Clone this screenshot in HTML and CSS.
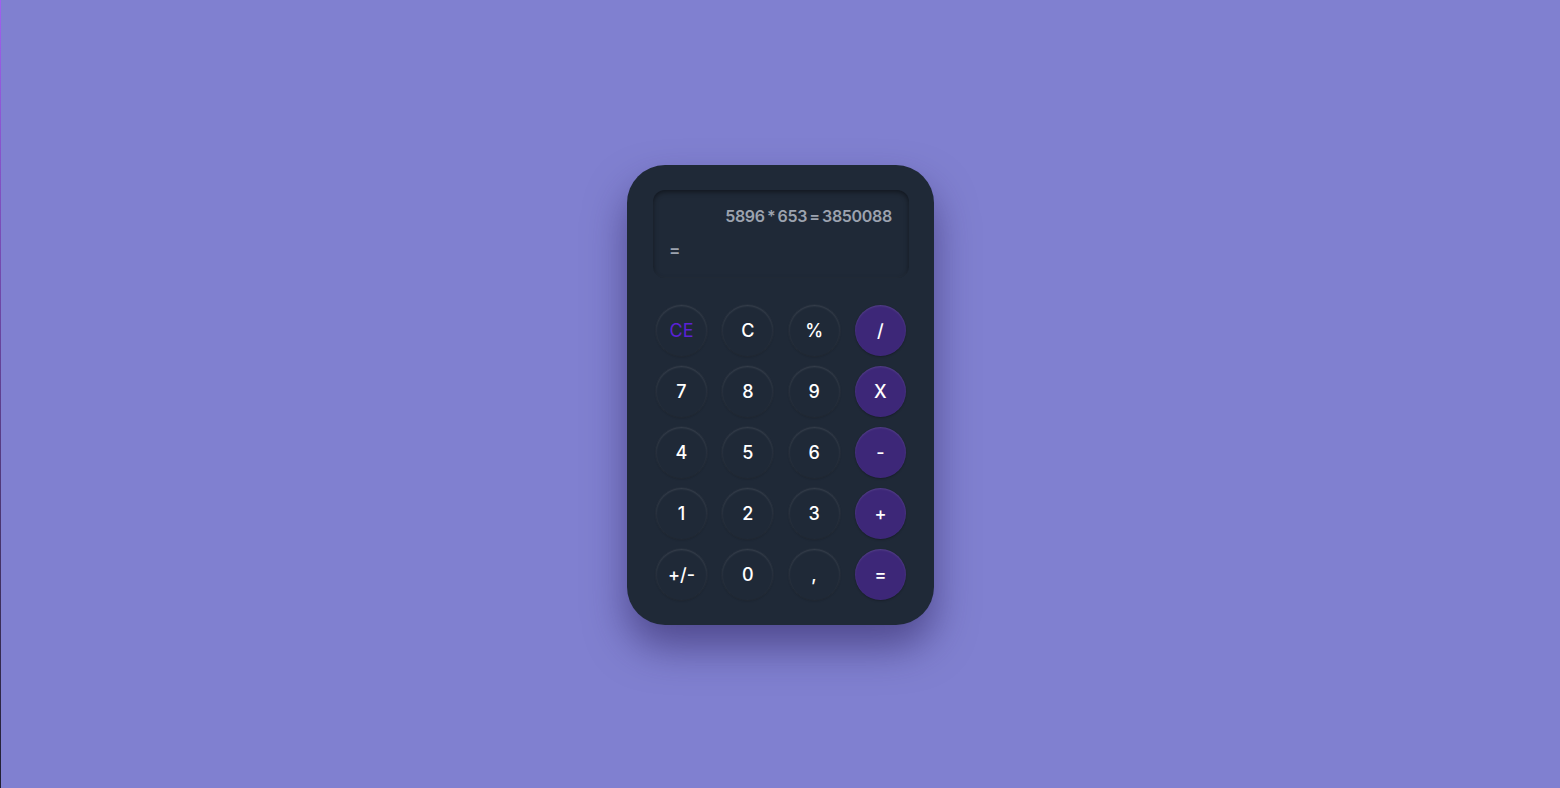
FILE: index.html
```html
<!DOCTYPE html>
<html lang="en">
<head>
<meta charset="utf-8">
<title>Calculator</title>
<link rel="stylesheet" href="styles.css">
</head>
<body>
<main class="page">
  <div class="calc">
    <div class="display">
      <div class="history">5896 * 653 = 3850088</div>
      <div class="current">=</div>
    </div>
    <div class="keys">
      <button class="key ce">CE</button>
      <button class="key">C</button>
      <button class="key">%</button>
      <button class="key op">/</button>
      <button class="key">7</button>
      <button class="key">8</button>
      <button class="key">9</button>
      <button class="key op">X</button>
      <button class="key">4</button>
      <button class="key">5</button>
      <button class="key">6</button>
      <button class="key op">-</button>
      <button class="key">1</button>
      <button class="key">2</button>
      <button class="key">3</button>
      <button class="key op">+</button>
      <button class="key">+/-</button>
      <button class="key">0</button>
      <button class="key">,</button>
      <button class="key op">=</button>
    </div>
  </div>
</main>
</body>
</html>
```
FILE: styles.css
```css
html, body {
  margin: 0;
  height: 100%;
}
body {
  background: #8080d0;
  font-family: Inter, "Noto Sans", sans-serif;
  border-left: 1px solid;
  border-image: linear-gradient(#a060f0, #202030) 1;
  box-sizing: border-box;
}
.page {
  height: 788px;
  display: flex;
  justify-content: center;
  align-items: flex-start;
  padding-top: 165px;
  box-sizing: border-box;
}
.calc {
  width: 307px;
  height: 460px;
  box-sizing: border-box;
  background: #1f2937;
  border-radius: 38px;
  padding: 25px 25px 25px 26px;
  box-shadow: 0 22px 40px rgba(40, 30, 90, 0.55);
  display: flex;
  flex-direction: column;
  gap: 27px;
}
.display {
  height: 89px;
  box-sizing: border-box;
  border-radius: 12px;
  background: #1f2937;
  box-shadow: inset 0 2px 5px rgba(0, 0, 0, 0.45), inset 0 -1px 2px rgba(255, 255, 255, 0.03);
  padding: 15px 17px 0 16px;
  color: #9ca3af;
  font-weight: 600;
  display: flex;
  flex-direction: column;
}
.history {
  text-align: right;
  font-size: 16px;
  line-height: 22px;
  letter-spacing: -0.3px;
  word-spacing: -1.5px;
}
.current {
  font-size: 17px;
  line-height: 22px;
  margin-top: 12px;
}
.keys {
  display: grid;
  grid-template-columns: repeat(4, 51px);
  column-gap: 15.3px;
  row-gap: 10px;
  padding-left: 3px;
}
.key {
  width: 51px;
  height: 51px;
  border-radius: 50%;
  border: none;
  background: #1f2937;
  color: #ffffff;
  font-family: Inter, "Noto Sans", sans-serif;
  font-size: 18px;
  font-weight: 500;
  padding: 0;
  box-shadow: inset 0 1px 2px rgba(255, 255, 255, 0.12), 0 0 0 1px rgba(255, 255, 255, 0.03), 0 1px 2px rgba(0, 0, 0, 0.25);
}
.key.ce {
  color: #5b21d6;
  font-weight: 400;
}
.key.op {
  background: #3d2778;
  box-shadow: inset 0 1px 2px rgba(255, 255, 255, 0.12), 0 1px 2px rgba(0, 0, 0, 0.25);
}
```
